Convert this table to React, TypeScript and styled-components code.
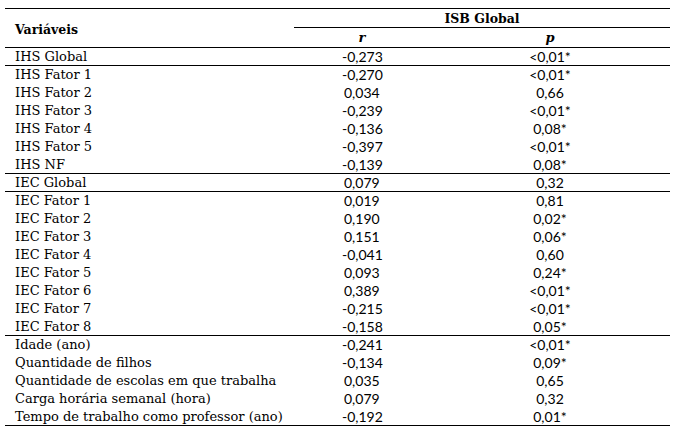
import React from "react";
import styled, { createGlobalStyle } from "styled-components";

const Global = createGlobalStyle`
  html, body { margin: 0; padding: 0; background: #fff; }
  body { width: 681px; height: 432px; overflow: hidden; }
`;

const Table = styled.table`
  margin: 8px 0 0 5px;
  width: 665px;
  border-collapse: collapse;
  table-layout: fixed;
  color: #000;
  border-top: 1px solid #000;
  border-bottom: 1px solid #000;
`;

const HeadLabel = styled.th`
  text-align: left;
  padding: 2px 0 0 10px;
  font: bold 12.5px "DejaVu Serif", serif;
  vertical-align: middle;
`;

const HeadGroup = styled.th<{ $rule?: boolean }>`
  padding: 0;
  height: 18px;
  text-align: center;
  font: bold 12.5px/17px "DejaVu Serif", serif;
  border-bottom: ${(p) => (p.$rule ? "1px solid #000" : "none")};
`;

const HeadStat = styled.th`
  padding: 0;
  height: 19px;
  text-align: center;
  font: italic bold 13px/18px "DejaVu Serif", serif;
`;

const HeadRow = styled.tr<{ $rule?: boolean }>`
  border-bottom: ${(p) => (p.$rule ? "1px solid #000" : "none")};
`;

const Row = styled.tr<{ $rule?: boolean }>`
  height: 18px;
  border-bottom: ${(p) => (p.$rule ? "1px solid #000" : "none")};
`;

const Label = styled.td`
  padding: 0 0 0 10px;
  font: 13px/17px "DejaVu Serif", serif;
  white-space: nowrap;
`;

const RValue = styled.td<{ $pos?: boolean }>`
  padding: 0 0 0 ${(p) => (p.$pos ? 50 : 48)}px;
  font: 14px/17px Lato, "Liberation Sans", sans-serif;
`;

const PValue = styled.td`
  padding: 0;
  text-align: center;
  font: 14px/17px Lato, "Liberation Sans", sans-serif;
`;

type Item = { label: string; r: string; p: string; rule?: boolean };

const rows: Item[] = [
  { label: "IHS Global", r: "-0,273", p: "<0,01*", rule: true },
  { label: "IHS Fator 1", r: "-0,270", p: "<0,01*" },
  { label: "IHS Fator 2", r: "0,034", p: "0,66" },
  { label: "IHS Fator 3", r: "-0,239", p: "<0,01*" },
  { label: "IHS Fator 4", r: "-0,136", p: "0,08*" },
  { label: "IHS Fator 5", r: "-0,397", p: "<0,01*" },
  { label: "IHS NF", r: "-0,139", p: "0,08*", rule: true },
  { label: "IEC Global", r: "0,079", p: "0,32", rule: true },
  { label: "IEC Fator 1", r: "0,019", p: "0,81" },
  { label: "IEC Fator 2", r: "0,190", p: "0,02*" },
  { label: "IEC Fator 3", r: "0,151", p: "0,06*" },
  { label: "IEC Fator 4", r: "-0,041", p: "0,60" },
  { label: "IEC Fator 5", r: "0,093", p: "0,24*" },
  { label: "IEC Fator 6", r: "0,389", p: "<0,01*" },
  { label: "IEC Fator 7", r: "-0,215", p: "<0,01*" },
  { label: "IEC Fator 8", r: "-0,158", p: "0,05*", rule: true },
  { label: "Idade (ano)", r: "-0,241", p: "<0,01*" },
  { label: "Quantidade de filhos", r: "-0,134", p: "0,09*" },
  { label: "Quantidade de escolas em que trabalha", r: "0,035", p: "0,65" },
  { label: "Carga horária semanal (hora)", r: "0,079", p: "0,32" },
  { label: "Tempo de trabalho como professor (ano)", r: "-0,192", p: "0,01*" },
];

export default function App() {
  return (
    <>
      <Global />
      <Table>
        <colgroup>
          <col style={{ width: 289 }} />
          <col style={{ width: 136 }} />
          <col style={{ width: 240 }} />
        </colgroup>
        <thead>
          <tr>
            <HeadLabel rowSpan={2}>Variáveis</HeadLabel>
            <HeadGroup colSpan={2} $rule>
              ISB Global
            </HeadGroup>
          </tr>
          <HeadRow $rule>
            <HeadStat>r</HeadStat>
            <HeadStat>p</HeadStat>
          </HeadRow>
        </thead>
        <tbody>
          {rows.map((it) => (
            <Row key={it.label} $rule={it.rule}>
              <Label>{it.label}</Label>
              <RValue $pos={!it.r.startsWith("-")}>{it.r}</RValue>
              <PValue>{it.p}</PValue>
            </Row>
          ))}
        </tbody>
      </Table>
    </>
  );
}
